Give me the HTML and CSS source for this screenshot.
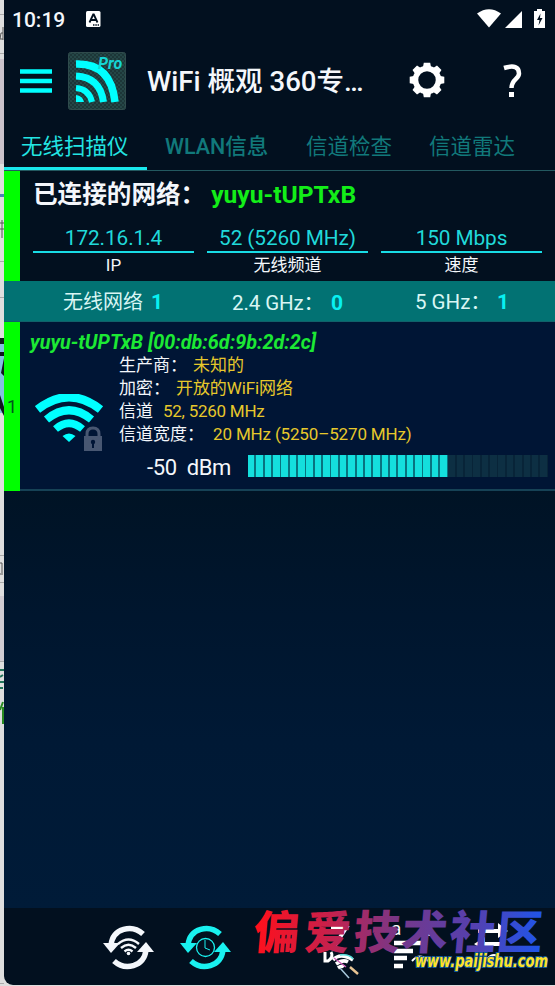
FILE: index.html
```html
<!DOCTYPE html>
<html lang="zh-CN">
<head>
<meta charset="utf-8">
<title>WiFi 概观 360专业版</title>
<link rel="stylesheet" href="styles.css">
</head>
<body>
<div class="screen">
  <div class="behind">
    <svg width="5" height="986" viewBox="0 0 5 986">
      <rect width="5" height="986" fill="#dedede"/>
      <path d="M0 14.500h4M0 53.500h4M0 261.500h4M0 297.500h4M0 555.500h4M0 582.500h4M0 596.500h4M0 661.500h4M0 983.500h4" stroke="#aaa"/>
      <path d="M0 59h4v105H0z" fill="#cbc3cb"/>
      <path d="M0 194h4v3H0z" fill="#4e83b6"/>
      <path d="M0 338h4v6H0zM0 352h4v4H0z" fill="#10161f"/>
      <path d="M0 344h4v8H0zM0 356h4v57H0z" fill="#82bedf"/>
      <path d="M4 358v18l-3-3zM0 395l4 12v9l-4-8z" fill="#10161f"/>
      <path d="M0 596h4v65H0z" fill="#d1ccd2"/>
      <path d="M3 27v13M3 33H1l-1 6h3M0 223h4M0 229h4M2 220v18M0 563h2v10M0 574h3" stroke="#555" fill="none"/>
      <path d="M0 670h4M0 677l3-2M0 682h4M0 688h3" stroke="#20745a" stroke-width="2" fill="none"/>
      <path d="M3 702l-3 8M3 707v17" stroke="#298b20" stroke-width="2" fill="none"/>
    </svg>
  </div>
  <main class="phone">
    <header class="status">
      <span class="clock">10:19</span>
      <svg class="lang" width="15" height="16" viewBox="0 0 15 16"><rect width="14.500" height="16" rx="1.500" fill="#fff"/><path d="M3.500 11.500L7.200 3.500h.6l3.700 8M5 9h5" stroke="#02101f" stroke-width="1.800" fill="none"/><path d="M7 14h6" stroke="#02101f" stroke-width="1.500" stroke-dasharray="1.500 .8"/></svg>
      <svg class="signals" width="72" height="22" viewBox="0 0 72 22"><g fill="#fff"><path d="M0 5.500Q12 -3 24 5.500L12 19.500z"/><path d="M45 3v17H28z"/><path d="M57 3h3V1h5v2h3v17H57z"/></g><path d="M63.500 5.500L60 12h2.500l-1 5.500L65.500 10H63z" fill="#02101f"/></svg>
    </header>
    <div class="appbar">
      <svg class="menu" width="32" height="25" viewBox="0 0 32 25"><path d="M0 2.500h32M0 12h32M0 21.500h32" stroke="#0ff" stroke-width="4.600"/></svg>
      <svg class="logo" width="58" height="58" viewBox="0 0 58 58">
        <defs><pattern id="mesh" width="4" height="4" patternUnits="userSpaceOnUse"><rect width="4" height="4" fill="#254747"/><path d="M0 0h2v2H0zM2 2h2v2H2z" fill="#1d3638"/></pattern></defs>
        <rect x=".5" y=".5" width="57" height="57" rx="2" fill="url(#mesh)" stroke="#304b4c"/>
        <g fill="none" stroke="#0ff"><path d="M8 12Q43 11 47 50" stroke-width="7.500"/><path d="M8 24Q32 25 35.500 50" stroke-width="7"/><path d="M8 36Q21 37 24 50" stroke-width="6"/></g>
        <path d="M8 43q7 1 8 7H8z" fill="#0ff"/>
        <text x="30" y="17" class="pro">Pro</text>
      </svg>
      <h1>WiFi 概观 360专…</h1>
      <svg class="gear" width="36" height="36" viewBox="0 0 36 36"><circle cx="18" cy="18" r="11.500" fill="none" stroke="#fff" stroke-width="5.500"/><g fill="#fff"><g id="teeth"><path d="M13.800 6L14.800 .7h6.400L22.200 6zM13.800 30l1 5.300h6.400l1-5.300z"/></g><use href="#teeth" transform="rotate(45 18 18)"/><use href="#teeth" transform="rotate(90 18 18)"/><use href="#teeth" transform="rotate(135 18 18)"/></g></svg>
      <svg class="help" width="20" height="34" viewBox="0 0 20 34"><path d="M2 4Q17 -.5 17 9.500C17 15 9.500 15 9.500 24" fill="none" stroke="#fff" stroke-width="4.500"/><path d="M7 28h5v5H7z" fill="#fff"/></svg>
    </div>
    <nav class="tabs"><span class="tab active">无线扫描仪</span><span class="tab wlan">WLAN信息</span><span class="tab check">信道检查</span><span class="tab radar">信道雷达</span></nav>
    <section class="connected">
      <div class="heading">已连接的网络：<b>yuyu-tUPTxB</b></div>
      <div class="stats">
        <div class="stat"><strong>172.16.1.4</strong><span>IP</span></div>
        <div class="stat"><strong>52 (5260 MHz)</strong><span>无线频道</span></div>
        <div class="stat"><strong>150 Mbps</strong><span>速度</span></div>
      </div>
    </section>
    <section class="summary">
      <span class="all">无线网络<b>1</b></span><span class="g24">2.4 GHz：<b>0</b></span><span class="g5">5 GHz：<b>1</b></span>
    </section>
    <article class="network">
      <div class="index">1</div>
      <div class="body">
        <div class="name">yuyu-tUPTxB [00:db:6d:9b:2d:2c]</div>
        <div class="info">
          <svg class="wifi" width="70" height="60" viewBox="0 0 70 60">
            <g fill="none" stroke="#0ff"><path d="M2.500 15.500Q34 -9 65.500 15.500" stroke-width="8.500"/><path d="M11.500 25.500Q34 7 56.500 25.500" stroke-width="8"/><path d="M20.500 35Q34 23.500 47.500 35" stroke-width="7.500"/></g><path d="M27.500 42Q34 37 40.500 42L34 48z" fill="#0ff"/>
            <path d="M49 42h18v15H49z" fill="#485772"/><path d="M52 43v-3q0-6 6-6t6 6v3" fill="none" stroke="#485772" stroke-width="3"/><circle cx="58" cy="48" r="2.200" fill="#001536"/><path d="M57 48h2v6h-2z" fill="#001536"/>
          </svg>
          <dl>
            <div><dt>生产商：</dt><dd class="d1">未知的</dd></div>
            <div><dt>加密：</dt><dd class="d2">开放的WiFi网络</dd></div>
            <div><dt>信道</dt><dd class="d3">52, 5260 MHz</dd></div>
            <div><dt>信道宽度：</dt><dd class="d4">20 MHz (5250–5270 MHz)</dd></div>
          </dl>
        </div>
        <div class="level"><span>-50&nbsp; dBm</span><div class="meter"><div class="fill"></div></div></div>
      </div>
    </article>
    <div class="empty"></div>
    <footer>
      <svg class="cycle" width="52" height="46" viewBox="0 0 52 46"><g id="arrows"><g id="arrow"><path d="M8 20C10 3 29-1 40 9" fill="none" stroke="currentColor" stroke-width="5.500"/><path d="M0 18h17L8 28z" fill="currentColor"/></g><use href="#arrow" transform="rotate(180 25.500 22.500)"/></g><g fill="none" stroke="currentColor" stroke-width="2.400"><path d="M15 19Q25.500 10 36 19M18 23Q25.500 16.500 33 23M21.500 26.500Q25.500 23 29.500 26.500"/></g><circle cx="25.500" cy="28.500" r="1.800" fill="currentColor"/></svg>
      <svg class="cycle cyan" width="52" height="46" viewBox="0 0 52 46"><use href="#arrows"/><circle cx="25.500" cy="22.500" r="9" fill="none" stroke="currentColor" stroke-width="1.300"/><path d="M25 15v8l5 2" fill="none" stroke="currentColor"/></svg>
      <svg class="sortz" width="48" height="60" viewBox="0 0 48 60"><path d="M15 9h15L19 26" stroke="#fff" stroke-width="4" fill="none"/><path d="M9 33v9h3q6-4 3-9" stroke="#fff" stroke-width="3" fill="none"/><path d="M17 41Q24 33 37 41M20 45q7-5 12-2M22 49q4-3 6-1" stroke="#fff" stroke-width="3.500" fill="none"/><path d="M18 39l12 9" stroke="#ce5aba" stroke-width="1.200"/><path d="M24 36q10-1 13 4" stroke="#55ddda" stroke-width="1.500" fill="none"/><path d="M34 48l8 7" stroke="#e8c493" stroke-width="2.500"/><path d="M24 49l9 10" stroke="#a9c9dc" stroke-width="1.500"/></svg>
      <svg class="sorta" width="46" height="52" viewBox="0 0 46 52"><text x="0" y="17" class="az">a</text><path d="M31 4h11L31 17h11" fill="none" stroke="#fff" stroke-width="2"/><path d="M3 25h30M3 33h19M3 40h13M3 48h9" stroke="#fff" stroke-width="4.500"/><path d="M21 43q8-9 16 0" fill="none" stroke="#fff" stroke-width="2"/></svg>
      <svg class="swap" width="48" height="44" viewBox="0 0 48 44"><path d="M9 11h20V5l10 8-10 7v-5H9zM35 24H16v-5L5 26l11 7v-5h19z" fill="#fff"/><path d="M18 41q7-8 14 0" fill="none" stroke="#fff" stroke-width="2"/></svg>
    </footer>
  </main>
  <div class="watermark">
    <svg width="305" height="78" viewBox="0 0 305 78"><defs><linearGradient id="ink" gradientUnits="userSpaceOnUse" x1="5" x2="294" y1="0" y2="0"><stop stop-color="#ff101c"/><stop offset=".25" stop-color="#c8204b"/><stop offset=".5" stop-color="#74388b"/><stop offset=".75" stop-color="#5540af"/><stop offset="1" stop-color="#1c56ed"/></linearGradient></defs>
    <text class="brush" transform="translate(3 0) skewX(-5)" x="3 54 103 151 199 246" y="41">偏爱技术社区</text><text class="site" x="165" y="59" textLength="133" lengthAdjust="spacingAndGlyphs">www.paijishu.com</text></svg>
  </div>
</div>
</body>
</html>
```

FILE: styles.css
```css
* { box-sizing: border-box; }
body { margin: 0; font-family: Roboto, "Noto Sans CJK SC", sans-serif; color: #f4f7fb; background: #dedede; }
svg { display: block; flex: none; }
.screen { position: relative; display: flex; width: 555px; height: 986px; overflow: hidden; }
.behind { width: 4px; overflow: hidden; flex: none; }
.phone { width: 551px; height: 985px; display: flex; flex-direction: column; background: #02101f; border-radius: 0 0 0 9px; overflow: hidden; white-space: nowrap; }
.status { height: 38px; display: flex; align-items: center; padding: 0 8px; flex: none; }
.clock { font-size: 21px; font-weight: 500; line-height: 38px; width: 74px; padding-top: 2px; }
.lang { margin-top: -1px; }
.signals { margin-left: auto; margin-right: -2px; }
.appbar { height: 86px; display: flex; align-items: center; padding-left: 16px; flex: none; }
.logo { margin-left: 16px; margin-top: -1px; }
.pro { font: italic 700 16px Roboto, sans-serif; fill: #15d5d5; }
h1 { margin: 0 0 0 21px; width: 262px; font-size: 27.600px; font-weight: 500; line-height: 50px; padding-top: 1px; }
.gear { margin-top: -2px; }
.help { margin-left: 57px; }
.tabs { height: 47px; display: flex; line-height: 46px; font-size: 21.500px; color: #11797b; border-bottom: 1px solid #235960; flex: none; }
.tab.active { width: 143px; height: 46px; padding-left: 17px; color: #23e5e3; border-bottom: 3px solid #19e8ed; }
.wlan { width: 155px; padding-left: 18px; font-weight: 500; }
.check { width: 127px; padding-left: 4px; }
.connected { height: 110px; flex: none; border-left: 16px solid #0f0; }
.heading { height: 49px; padding-left: 13px; font-size: 24.600px; font-weight: 700; line-height: 48px; }
.heading b { color: #13ee18; margin-left: 6px; font-weight: 700; }
.stats { display: flex; gap: 13px; padding-left: 13px; }
.stat { width: 161px; text-align: center; }
.stat strong { display: block; height: 33px; line-height: 36px; color: #20d9da; border-bottom: 2px solid #18dce5; font-weight: 400; font-size: 20.800px; letter-spacing: -.1px; }
.stat span { display: block; font-size: 17px; line-height: 25px; }
.summary { height: 40px; flex: none; display: flex; background: #027273; color: #d9f6f4; font-size: 20px; line-height: 42px; }
.summary b { color: #08f0f1; font-size: 21px; }
.all { width: 228px; padding-left: 59px; }
.all b { margin-left: 8px; }
.g24 { width: 183px; line-height: 44px; font-size: 20.500px; letter-spacing: -.1px; }
.g24 b { margin-left: 7px; }
.g5 { font-size: 20.500px; }
.g5 b { margin-left: 6px; }
.network { height: 170px; display: flex; background: #001535; border-top: 1px solid #11616a; border-bottom: 2px solid #164256; flex: none; }
.index { width: 16px; height: 169px; background: #0f0; color: #00551c; padding-left: 3px; font-size: 18px; line-height: 170px; flex: none; }
.body { width: 535px; }
.name { height: 32px; padding-left: 10px; color: #1ce934; font-size: 19.800px; font-style: italic; font-weight: 700; line-height: 41px; }
.info { display: flex; padding-left: 15px; }
.wifi { margin-top: 40px; }
dl { margin: 0 0 0 14px; font-size: 17px; line-height: 23px; }
dl div { display: flex; height: 23px; }
dd { margin: 0; color: #e7c82b; }
.d1 { margin-left: 6px; }
.d2 { margin-left: 6px; letter-spacing: -.1px; }
.d3 { margin-left: 10px; letter-spacing: -.25px; }
.d4 { margin-left: 9px; letter-spacing: -.15px; }
.level { display: flex; align-items: center; height: 40px; margin-top: -9px; padding-left: 126px; font-size: 22px; }
.level span { width: 102px; padding-top: 4px; padding-left: 1px; letter-spacing: -.4px; }
.meter { width: 300px; height: 22px; margin-top: 1px; background: repeating-linear-gradient(90deg, #0d2f43 0 6.500px, #082438 6.500px 8.350px); }
.fill { width: 200px; height: 22px; background: repeating-linear-gradient(90deg, #14dfdd 0 6.500px, #08737f 6.500px 8.350px); }
.empty { flex: 1; background: linear-gradient(180deg, #001325 0%, #00162e 30%, #001935 60%, #001b38 100%); }
footer { height: 77px; flex: none; display: flex; padding: 17px 0 0 99px; }
.cyan { color: #19f1f0; margin-left: 25px; }
.sortz { margin-left: 84px; margin-top: -6px; }
.sorta { margin-left: 27px; margin-top: -7px; }
.swap { margin-left: 32px; margin-top: -7px; }
.az { font: 19px Roboto, sans-serif; fill: #fff; }
.watermark { position: absolute; left: 250px; top: 908px; }
.brush { font: 900 46px "Noto Sans CJK SC", sans-serif; fill: url(#ink); }
.site { font: italic bold 17px "DejaVu Sans", sans-serif; fill: #ffe326; stroke: #155b9b; stroke-width: 2px; paint-order: stroke; }
```
